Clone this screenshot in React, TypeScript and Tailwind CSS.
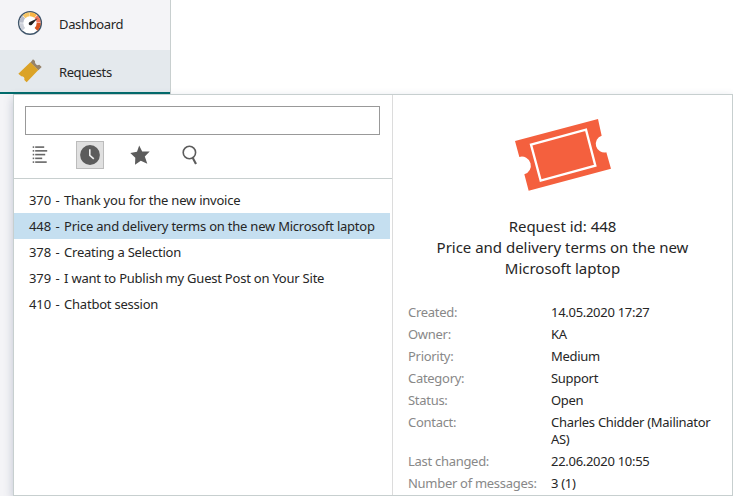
const requests = [
  { id: 370, title: 'Thank you for the new invoice' },
  { id: 448, title: 'Price and delivery terms on the new Microsoft laptop' },
  { id: 378, title: 'Creating a Selection' },
  { id: 379, title: 'I want to Publish my Guest Post on Your Site' },
  { id: 410, title: 'Chatbot session' },
];

const details = [
  ['Created:', '14.05.2020 17:27'],
  ['Owner:', 'KA'],
  ['Priority:', 'Medium'],
  ['Category:', 'Support'],
  ['Status:', 'Open'],
  ['Contact:', 'Charles Chidder (Mailinator AS)'],
  ['Last changed:', '22.06.2020 10:55'],
  ['Number of messages:', '3 (1)'],
];

function GaugeIcon() {
  return (
    <svg width="26" height="26" viewBox="0 0 78 78" className="block">
      <circle cx="39" cy="39" r="34" fill="#fff" stroke="#40566b" strokeWidth="4.5" />
      <g fill="none" strokeWidth="12">
        <path d="M20 58 A26 26 0 0 1 13 40" stroke="#cdd0d8" />
        <path d="M13 38 A26 26 0 0 1 20 21" stroke="#b9bdc9" />
        <path d="M21 20 A26 26 0 0 1 38 13" stroke="#f5c565" />
        <path d="M39 13 A26 26 0 0 1 56 19" stroke="#f9b545" />
        <path d="M57 20 A26 26 0 0 1 65 38" stroke="#f4765a" />
        <path d="M65 39 A26 26 0 0 1 57 58" stroke="#d9541e" />
      </g>
      <path d="M62 25 L44 45 Q37 48 35 42 Q35 38 38 36 Z" fill="#222" />
    </svg>
  );
}

function SmallTicketIcon() {
  return (
    <svg width="26" height="26" viewBox="0 0 78 78" className="block">
      <path d="M48 4 L54 9 Q53 18 61 22 L67 20 L74 27 L64 37 L40 14 Z" fill="#96836a" />
      <path d="M40 13 L64 36 L29 73 L22 66 Q24 55 13 55 L4 47 Z" fill="#dba327" />
    </svg>
  );
}

function TicketIcon() {
  return (
    <svg width="130" height="100" viewBox="0 0 390 300" className="block">
      <path
        d="M45 108 L294 42 L305 92 A26 26 0 0 0 319 142 L333 191 L86 257 L73 208 A26 26 0 0 0 58 156 Z"
        fill="#f4603e"
      />
      <path d="M93 119 L258 74 L286 182 L122 227 Z" fill="none" stroke="#fff" strokeWidth="7" />
    </svg>
  );
}

function ListIcon() {
  return (
    <svg width="16" height="18" viewBox="0 0 16 18" className="block" fill="#666">
      {[9, 12, 10, 7, 11.5].map((w, i) => (
        <g key={i}>
          <rect x="0.7" y={0.3 + i * 3.75} width="1.5" height="1.6" />
          <rect x="3.2" y={0.3 + i * 3.75} width={w} height="1.6" />
        </g>
      ))}
    </svg>
  );
}

function ClockIcon() {
  return (
    <svg width="20" height="20" viewBox="0 0 20 20" className="block">
      <circle cx="10" cy="10" r="9.9" fill="#5c5c5c" />
      <path d="M9.8 4.2 V10.3 L13.8 13.8" fill="none" stroke="#eee" strokeWidth="1.6" />
    </svg>
  );
}

function StarIcon() {
  return (
    <svg width="20" height="20" viewBox="0 0 20 20" className="block">
      <path d="M9.2 0.5 L12.2 6.4 L19.7 6.5 L14.8 11.4 L17.3 18.8 L10.8 15.8 L5 19.7 L5.3 12.7 L0.3 8 L7 6.7 Z" fill="#5c5c5c" />
    </svg>
  );
}

function SearchIcon() {
  return (
    <svg width="16" height="20" viewBox="0 0 16 20" className="block" fill="none" stroke="#5c5c5c">
      <circle cx="7.4" cy="7.5" r="6.2" strokeWidth="1.6" />
      <path d="M10.8 13 L14 19" strokeWidth="2.1" />
    </svg>
  );
}

export default function App() {
  return (
    <div className="flex h-[496px] w-[733px] flex-col overflow-hidden bg-white font-['Noto_Sans',sans-serif] text-[13px] leading-[18px] text-[#262626]">
      <nav className="h-[94px] w-[171px] shrink-0 border-r border-[#c8cfcf]">
        <div className="flex h-[50px] items-start bg-[#f4f4f7] pl-[17px] pt-[10px]">
          <GaugeIcon />
          <span className="ml-4 mt-[5px] tracking-[-0.35px]">Dashboard</span>
        </div>
        <div className="flex h-[44px] items-start border-b-2 border-[#006b6b] bg-[#e4e9ed] pl-[17px] pt-[8px]">
          <SmallTicketIcon />
          <span className="ml-4 mt-[5px] tracking-[-0.4px]">Requests</span>
        </div>
      </nav>

      <div className="flex min-h-0 flex-1 bg-[#f4f4f7] pl-[13px]">
        <section className="flex flex-1 border border-[#c7cfcf] bg-white shadow-[0_4px_9px_rgba(70,85,120,0.3)]">
          <div className="w-[379px] shrink-0 border-r border-[#dcdcdc]">
            <div className="h-[84px] border-b border-[#c8cfcf] pl-[11px] pt-[11px]">
              <input aria-label="Search requests" className="block h-[29px] w-[355px] border border-[#999] bg-white px-2 outline-none" />
              <div className="mt-[6px] flex h-[28px] items-center">
                <button className="ml-[7px] flex w-4 justify-center"><ListIcon /></button>
                <button className="ml-[28px] flex h-[28px] w-[28px] items-center justify-center border border-[#bcbcbc] bg-[#e0e0e0]"><ClockIcon /></button>
                <button className="ml-[26px]"><StarIcon /></button>
                <button className="ml-[32px]"><SearchIcon /></button>
              </div>
            </div>
            <ul className="pr-[2px] pt-[8px]">
              {requests.map((r) => (
                <li key={r.id} className={`flex h-[26px] items-center whitespace-nowrap pl-[15px] ${r.id === 448 ? 'bg-[#c5dff0]' : ''}`}>
                  <span className="tracking-[-0.225px]">
                    <span className="tracking-[-0.1px] [word-spacing:1.2px]">{r.id} - </span>
                    {r.title}
                  </span>
                </li>
              ))}
            </ul>
          </div>

          <div className="flex flex-1 flex-col pl-[15px] pr-[10px]">
            <div className="ml-[92px] mt-[10px]"><TicketIcon /></div>
            <div className="-ml-[15px] -mr-[10px] mt-[11px] text-center text-[15px] leading-[21px] tracking-[-0.02px]">
              <p>Request id: 448</p>
              <p>Price and delivery terms on the new</p>
              <p>Microsoft laptop</p>
            </div>
            <dl className="mt-[25px] flex flex-col gap-[5px] leading-[17px] tracking-[-0.29px]">
              {details.map(([label, value]) => (
                <div key={label} className="flex">
                  <dt className="w-[143px] shrink-0 whitespace-nowrap text-[#888]">{label}</dt>
                  <dd>{value}</dd>
                </div>
              ))}
            </dl>
          </div>
        </section>
      </div>
    </div>
  );
}
